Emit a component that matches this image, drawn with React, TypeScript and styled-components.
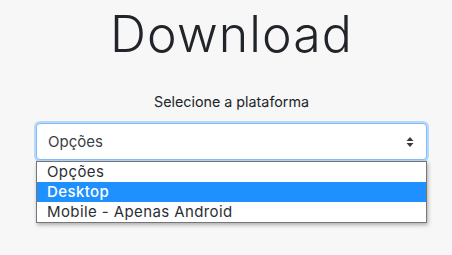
import styled, { createGlobalStyle } from "styled-components";

const GlobalStyle = createGlobalStyle`
  html, body {
    margin: 0;
    background: #f7f7f7;
    font-family: Inter, "Noto Sans", sans-serif;
    color: #212529;
  }
  #root {
    min-height: 100vh;
  }
`;

// coluna central da página
const Page = styled.div`
  width: 391px;
  margin-left: 36px;
  display: flex;
  flex-direction: column;
  align-items: center;
`;

const Title = styled.h1`
  margin: 0;
  padding-top: 2px;
  font-size: 50px;
  font-weight: 300;
  line-height: 64px;
  letter-spacing: 1.1px;
  color: #212529;
`;

const Label = styled.label`
  margin-top: 26px;
  font-size: 14.3px;
  line-height: 20px;
  color: #212529;
`;

const SelectWrap = styled.div`
  width: 100%;
  margin-top: 11px;
  display: flex;
  flex-direction: column;
`;

// caixa do select com foco
const SelectBox = styled.div`
  box-sizing: border-box;
  height: 37px;
  display: flex;
  align-items: center;
  justify-content: space-between;
  padding: 0 12px 0 11px;
  background: #fff;
  border: 1px solid #80bdff;
  border-radius: 4px;
  box-shadow: 0 0 0 2px rgba(0, 123, 255, 0.25);
  font-size: 15px;
  color: #3a3f44;
`;

const Arrows = styled.svg`
  width: 8px;
  height: 12px;
`;

// lista aberta do select
const OptionList = styled.div`
  margin-top: 1px;
  display: flex;
  flex-direction: column;
  background: #fff;
  border: 1px solid #767676;
  box-shadow: 1px 2px 4px rgba(0, 0, 0, 0.3);
`;

const OptionRow = styled.div<{ $active?: boolean }>`
  height: 20px;
  line-height: 20px;
  padding-left: 10px;
  font-size: 15px;
  letter-spacing: 0.4px;
  font-weight: ${(p) => (p.$active ? 500 : 400)};
  color: ${(p) => (p.$active ? "#fff" : "#2b2f33")};
  background: ${(p) => (p.$active ? "#1e90ff" : "transparent")};
`;

const options = ["Opções", "Desktop", "Mobile - Apenas Android"];

export default function App() {
  return (
    <>
      <GlobalStyle />
      <Page>
        <Title>Download</Title>
        <Label>Selecione a plataforma</Label>
        <SelectWrap>
          <SelectBox>
            <span>Opções</span>
            <Arrows viewBox="0 0 8 12">
              <path d="M4 1 L7.5 5 H0.5 Z M4 11 L7.5 7 H0.5 Z" fill="#343a40" />
            </Arrows>
          </SelectBox>
          <OptionList>
            {options.map((o) => (
              <OptionRow key={o} $active={o === "Desktop"}>
                {o}
              </OptionRow>
            ))}
          </OptionList>
        </SelectWrap>
      </Page>
    </>
  );
}
